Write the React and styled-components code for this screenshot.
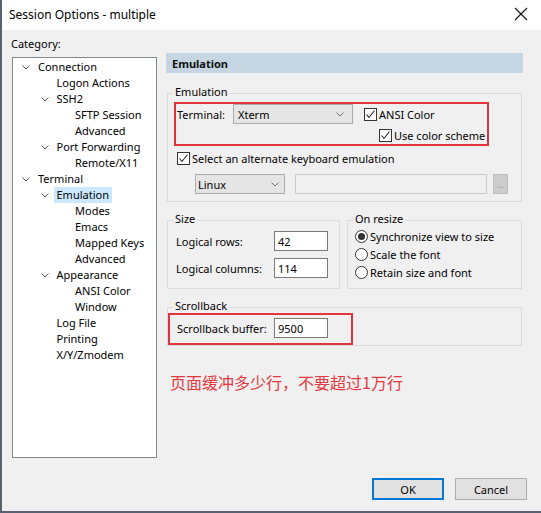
import React from "react";
import styled, { createGlobalStyle } from "styled-components";

const GlobalStyle = createGlobalStyle`
  html, body {
    margin: 0;
    padding: 0;
    background: #f0f0f0;
  }
  body {
    font-family: "Noto Sans", "Liberation Sans", sans-serif;
    font-size: 11px;
    color: #000;
  }
  * {
    box-sizing: border-box;
  }
`;

const tree = [
  { label: "Connection", level: 0, open: true },
  { label: "Logon Actions", level: 1 },
  { label: "SSH2", level: 1, open: true },
  { label: "SFTP Session", level: 2 },
  { label: "Advanced", level: 2 },
  { label: "Port Forwarding", level: 1, open: true },
  { label: "Remote/X11", level: 2 },
  { label: "Terminal", level: 0, open: true },
  { label: "Emulation", level: 1, open: true, selected: true },
  { label: "Modes", level: 2 },
  { label: "Emacs", level: 2 },
  { label: "Mapped Keys", level: 2 },
  { label: "Advanced", level: 2 },
  { label: "Appearance", level: 1, open: true },
  { label: "ANSI Color", level: 2 },
  { label: "Window", level: 2 },
  { label: "Log File", level: 1 },
  { label: "Printing", level: 1 },
  { label: "X/Y/Zmodem", level: 1 },
];

const Chevron = ({ color = "#5a5a5a" }) => (
  <svg width="8" height="5" viewBox="0 0 8 5">
    <polyline points="0.5,0.5 4,4 7.5,0.5" fill="none" stroke={color} strokeWidth="1" />
  </svg>
);

const CheckBox = ({ checked }) => (
  <Box>
    {checked && (
      <svg width="11" height="11" viewBox="0 0 11 11">
        <polyline points="1.5,5.5 4,8.5 9.5,1.5" fill="none" stroke="#222" strokeWidth="1.1" />
      </svg>
    )}
  </Box>
);

const Radio = ({ checked }) => <Circle>{checked && <Dot />}</Circle>;

const App = () => {
  return (
    <>
      <GlobalStyle />
      <Window>
        <TitleBar>
          <span>Session Options - multiple</span>
          <svg width="14" height="14" viewBox="0 0 14 14">
            <path d="M1 1 L13 13 M13 1 L1 13" stroke="#111" strokeWidth="1.1" />
          </svg>
        </TitleBar>

        <Main>
          <LeftCol>
            <CategoryLabel>Category:</CategoryLabel>
            <Tree>
              {tree.map((item, i) => (
                <TreeRow key={i} level={item.level}>
                  <Expander>{item.open && <Chevron />}</Expander>
                  <TreeLabel selected={item.selected}>{item.label}</TreeLabel>
                </TreeRow>
              ))}
            </Tree>
          </LeftCol>

          <RightCol>
            <Header>Emulation</Header>

            <Group top={20}>
              <GroupTitle>Emulation</GroupTitle>
              <Highlight width={315} mt={3} ml={6}>
                <Row>
                  <FieldLabel width={56}>Terminal:</FieldLabel>
                  <Combo width={120}>
                    <span>Xterm</span>
                    <Chevron color="#777" />
                  </Combo>
                  <Check ml={11}>
                    <CheckBox checked />
                    <span>ANSI Color</span>
                  </Check>
                </Row>
                <Row pl={202} mt={3}>
                  <Check>
                    <CheckBox checked />
                    <span>Use color scheme</span>
                  </Check>
                </Row>
              </Highlight>
              <Row pl={9} mt={4}>
                <Check>
                  <CheckBox checked />
                  <span>Select an alternate keyboard emulation</span>
                </Check>
              </Row>
              <Row pl={27} mt={8} pb={7}>
                <Combo width={90} small>
                  <span>Linux</span>
                  <Chevron color="#777" />
                </Combo>
                <DisabledField />
                <DotsButton>...</DotsButton>
              </Row>
            </Group>

            <GroupRow>
              <Group width={173}>
                <GroupTitle>Size</GroupTitle>
                <Row pl={8} mt={5}>
                  <FieldLabel width={98}>Logical rows:</FieldLabel>
                  <TextField>42</TextField>
                </Row>
                <Row pl={8} mt={7} pb={10}>
                  <FieldLabel width={98}>Logical columns:</FieldLabel>
                  <TextField>114</TextField>
                </Row>
              </Group>
              <Group width={175}>
                <GroupTitle>On resize</GroupTitle>
                <RadioList>
                  <Check>
                    <Radio checked />
                    <span>Synchronize view to size</span>
                  </Check>
                  <Check>
                    <Radio />
                    <span>Scale the font</span>
                  </Check>
                  <Check>
                    <Radio />
                    <span>Retain size and font</span>
                  </Check>
                </RadioList>
              </Group>
            </GroupRow>

            <Group top={18}>
              <GroupTitle>Scrollback</GroupTitle>
              <Highlight width={185} mt={0} ml={0} pad="3px 0 5px 7px">
                <Row>
                  <FieldLabel width={97}>Scrollback buffer:</FieldLabel>
                  <TextField>9500</TextField>
                </Row>
              </Highlight>
            </Group>

            <Note>页面缓冲多少行，不要超过1万行</Note>
          </RightCol>
        </Main>

        <Footer>
          <Button primary>OK</Button>
          <Button>Cancel</Button>
        </Footer>
      </Window>
    </>
  );
};

export default App;

const Window = styled.div`
  width: 541px;
  height: 513px;
  display: flex;
  flex-direction: column;
  background: #f0f0f0;
  border-left: 2px solid #58616f;
  border-bottom: 2px solid #58616f;
`;

const TitleBar = styled.div`
  height: 30px;
  flex-shrink: 0;
  background: #fff;
  display: flex;
  align-items: center;
  justify-content: space-between;
  padding: 0 13px 2px 7px;
  font-size: 12px;
  color: #000;
`;

const Main = styled.div`
  display: flex;
  align-items: flex-start;
  padding: 6px 0 0 9px;
`;

const LeftCol = styled.div`
  display: flex;
  flex-direction: column;
`;

const CategoryLabel = styled.div`
  line-height: 16px;
  height: 16px;
`;

const Tree = styled.div`
  margin: 5px 0 0 1px;
  width: 145px;
  height: 401px;
  background: #fff;
  border: 1px solid #828790;
  padding-top: 1px;
`;

const TreeRow = styled.div`
  height: 16px;
  display: flex;
  align-items: center;
  padding-left: ${(p) => 9 + p.level * 18.5}px;
`;

const Expander = styled.div`
  width: 13px;
  height: 16px;
  display: flex;
  align-items: center;
  flex-shrink: 0;
`;

const TreeLabel = styled.span`
  padding: 0 3px;
  line-height: 16px;
  white-space: nowrap;
  background: ${(p) => (p.selected ? "#cce8ff" : "transparent")};
`;

const RightCol = styled.div`
  margin-left: 9px;
  padding-top: 17px;
  width: 357px;
  display: flex;
  flex-direction: column;
`;

const Header = styled.div`
  height: 20px;
  background: #c6d5e2;
  font-weight: bold;
  display: flex;
  align-items: center;
  padding-left: 6px;
  color: #111;
`;

const Group = styled.div`
  margin: ${(p) => p.top || 0}px 1px 0 1px;
  width: ${(p) => (p.width ? `${p.width}px` : "auto")};
  border: 1px solid #dcdcdc;
  display: flex;
  flex-direction: column;
  align-items: flex-start;
`;

const GroupRow = styled.div`
  display: flex;
  gap: 7px;
  margin-top: 18px;
  & > ${Group} {
    margin: 0;
  }
  & > ${Group}:first-child {
    margin-left: 1px;
  }
`;

const GroupTitle = styled.div`
  margin: -9px 0 0 5px;
  padding: 0 2px;
  height: 14px;
  line-height: 14px;
  background: #f0f0f0;
`;

const Highlight = styled.div`
  width: ${(p) => p.width}px;
  margin: ${(p) => p.mt}px 0 0 ${(p) => p.ml}px;
  border: 2px solid #e2343f;
  padding: ${(p) => p.pad || "0 0 1px 1px"};
  display: flex;
  flex-direction: column;
`;

const Row = styled.div`
  display: flex;
  align-items: center;
  padding-left: ${(p) => p.pl || 0}px;
  margin-top: ${(p) => p.mt || 0}px;
  padding-bottom: ${(p) => p.pb || 0}px;
`;

const FieldLabel = styled.div`
  width: ${(p) => p.width}px;
  flex-shrink: 0;
  white-space: nowrap;
`;

const Combo = styled.div`
  width: ${(p) => p.width}px;
  height: 20px;
  background: #e5e5e5;
  border: 1px solid #acacac;
  display: flex;
  align-items: center;
  justify-content: space-between;
  padding: 0 ${(p) => (p.small ? 5 : 8)}px 0 ${(p) => (p.small ? 2 : 4)}px;
`;

const Check = styled.label`
  display: flex;
  align-items: center;
  gap: 2px;
  height: 16px;
  margin-left: ${(p) => p.ml || 0}px;
  white-space: nowrap;
`;

const Box = styled.span`
  width: 13px;
  height: 13px;
  border: 1px solid #333;
  background: #fff;
  display: flex;
  align-items: center;
  justify-content: center;
  flex-shrink: 0;
`;

const Circle = styled.span`
  width: 13px;
  height: 13px;
  border: 1px solid #333;
  border-radius: 50%;
  background: #fff;
  display: flex;
  align-items: center;
  justify-content: center;
  flex-shrink: 0;
`;

const Dot = styled.span`
  width: 7px;
  height: 7px;
  border-radius: 50%;
  background: #333;
`;

const RadioList = styled.div`
  display: flex;
  flex-direction: column;
  gap: 2px;
  padding: 2px 0 5px 7px;
`;

const TextField = styled.div`
  width: 54px;
  height: 20px;
  background: #fff;
  border: 1px solid #7a7a7a;
  display: flex;
  align-items: center;
  padding-left: 3px;
`;

const DisabledField = styled.div`
  width: 192px;
  height: 20px;
  margin-left: 10px;
  background: #f0f0f0;
  border: 1px solid #cccccc;
`;

const DotsButton = styled.div`
  width: 15px;
  height: 20px;
  margin-left: 6px;
  background: #cccccc;
  border: 1px solid #bfbfbf;
  color: #8a8a8a;
  display: flex;
  align-items: center;
  justify-content: center;
  font-size: 9px;
`;

const Note = styled.div`
  margin: 25px 0 0 4px;
  font-family: "Noto Sans CJK SC", "Noto Sans", sans-serif;
  font-size: 16px;
  line-height: 22px;
  color: #e3393f;
`;

const Footer = styled.div`
  margin-top: auto;
  display: flex;
  justify-content: flex-end;
  gap: 11px;
  padding: 0 14px 11px 0;
`;

const Button = styled.div`
  width: 72px;
  height: 22px;
  background: #e1e1e1;
  border: ${(p) => (p.primary ? "2px solid #0078d7" : "1px solid #adadad")};
  display: flex;
  align-items: center;
  justify-content: center;
`;
